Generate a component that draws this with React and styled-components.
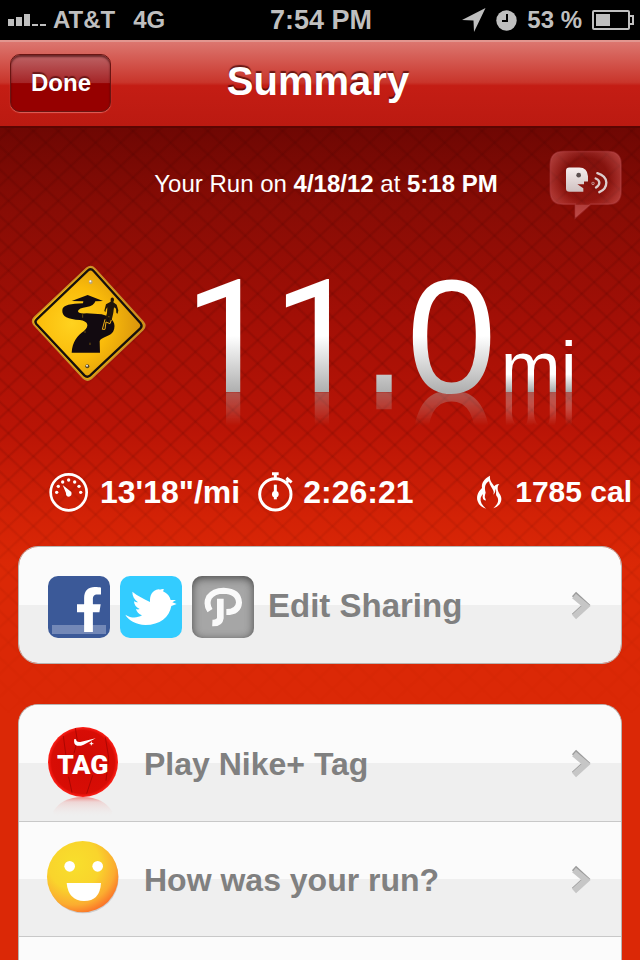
import React from 'react';
import styled, { createGlobalStyle } from 'styled-components';
import { FaFacebookF } from 'react-icons/fa';

const GlobalStyle = createGlobalStyle`
  * {
    box-sizing: border-box;
  }

  body {
    margin: 0;
    background: #db2806;
    font-family: "Liberation Sans", Arial, sans-serif;
  }

  button {
    font-family: inherit;
    border: 0;
    padding: 0;
    background: none;
    cursor: pointer;
  }
`;

const Screen = styled.div`
  display: flex;
  flex-direction: column;
  min-height: 100vh;
`;

const StatusBar = styled.div`
  display: grid;
  grid-template-columns: 1fr auto 1fr;
  align-items: center;
  height: 40px;
  padding: 0 6px 0 8px;
  background: #000;
  color: #bfbfbf;
  font-size: 27px;
  font-weight: bold;
  white-space: nowrap;
`;

const StatusGroup = styled.div`
  display: flex;
  align-items: center;
  justify-content: ${props => props.$end ? 'flex-end' : 'flex-start'};
  gap: ${props => props.$gap}px;
  font-size: 24px;
`;

const Carrier = styled.span`
  margin-right: 12px;
`;

const NavBar = styled.header`
  display: grid;
  grid-template-columns: 1fr auto 1fr;
  align-items: center;
  height: 88px;
  padding: 0 10px 2px;
  border-top: 2px solid #e2968f;
  border-bottom: 2px solid #5c0502;
  background: linear-gradient(#dc766f, #c9352b 48%, #c41d14 52%, #bb1a11);
`;

const DoneButton = styled.button`
  justify-self: start;
  height: 58px;
  padding: 0 19px 0 20px;
  border: 1px solid #6a1512;
  border-radius: 10px;
  background: linear-gradient(#bd6466, #a52426 50%, #960000 51%, #960000);
  box-shadow: inset 0 2px 2px rgba(50, 0, 0, 0.6), 0 1px 1px #e0625a;
  color: #fff;
  font-size: 24px;
  font-weight: bold;
  text-shadow: 0 -2px 1px rgba(60, 0, 0, 0.6);
`;

const Title = styled.h1`
  margin: 0 4px 4px 0;
  color: #fff;
  font-size: 40px;
  line-height: 48px;
  text-shadow: 0 -2px 1px rgba(60, 0, 0, 0.7);
`;

const Content = styled.main`
  position: relative;
  isolation: isolate;
  display: flex;
  flex-direction: column;
  flex: 1;
  padding-top: 21px;
  background: linear-gradient(#6f0703, #880c05 80px, #a20f06 190px, #b91406 300px, #d32206 390px, #db2806 440px);

  &::before {
    content: '';
    position: absolute;
    z-index: -1;
    inset: 0;
    background:
      repeating-linear-gradient(43deg, rgba(60, 0, 0, 0.14) 0, transparent 2px, transparent 15px, rgba(60, 0, 0, 0.14) 17px),
      repeating-linear-gradient(-43deg, rgba(60, 0, 0, 0.14) 0, transparent 2px, transparent 15px, rgba(60, 0, 0, 0.14) 17px);
    mask-image: linear-gradient(#000 300px, rgba(0, 0, 0, 0.5) 420px, transparent 590px);
  }
`;

const RunHeader = styled.div`
  display: grid;
  grid-template-columns: 1fr auto 1fr;
  align-items: center;
  padding: 0 16px 0 28px;
`;

const RunDate = styled.p`
  grid-column: 2;
  margin: 0 0 2px;
  color: #fff;
  font-size: 24px;
  white-space: nowrap;
`;

const VoiceButton = styled.button`
  justify-self: end;

  svg {
    display: block;
  }
`;

const Distance = styled.div`
  display: flex;
  align-items: center;
  margin-top: 35px;
  padding-left: 30px;

  > svg {
    flex: none;
    margin-bottom: 26px;
  }
`;

const Reading = styled.div`
  display: flex;
  align-items: baseline;
  gap: 4px;
  margin-left: 36px;
`;

const Amount = styled.span`
  height: 162px;
  font-size: 162px;
  line-height: 162px;
  color: transparent;
  background: linear-gradient(#fff 50%, #b0b0b0 84%);
  background-clip: text;
  -webkit-box-reflect: below -50px linear-gradient(transparent 64%, rgba(255, 255, 255, 0.4) 84%, transparent 85%);
`;

const Ones = styled.span`
  font-family: Roboto, "Liberation Sans", sans-serif;
  font-size: 158px;
`;

const Unit = styled.span`
  height: 72px;
  font-size: 72px;
  line-height: 72px;
  color: transparent;
  background: linear-gradient(#fff 60%, #aaa 84%);
  background-clip: text;
  -webkit-box-reflect: below -22px linear-gradient(transparent 38%, rgba(255, 255, 255, 0.45) 84%, transparent 85%);
`;

const Stats = styled.div`
  display: flex;
  align-items: center;
  gap: 18px;
  margin-top: 55px;
  padding: 0 8px 0 49px;
`;

const Stat = styled.div`
  display: flex;
  align-items: center;
  gap: ${props => props.$gap}px;
  height: 40px;
  margin-left: ${props => props.$last ? 'auto' : 0};
  color: #fff;
  font-size: ${props => props.$last ? 30 : 32}px;
  font-weight: bold;
  white-space: nowrap;
`;

const Card = styled.section`
  display: flex;
  flex-direction: column;
  flex: ${props => props.$open ? '1' : 'none'};
  margin: ${props => props.$open ? '40px' : '34px'} 18px 0;
  border: 1px solid #b9b4b2;
  border-bottom-width: ${props => props.$open ? 0 : 1}px;
  border-radius: ${props => props.$open ? '20px 20px 0 0' : '20px'};
  background: #fbfbfb;
  overflow: hidden;
`;

const Row = styled.button`
  display: flex;
  align-items: center;
  gap: ${props => props.$gap}px;
  min-height: 116px;
  padding: 0 30px 0 ${props => props.$inset || 29}px;
  background: linear-gradient(#fbfbfb 50%, #efefef 50%);
  color: #808080;
  font-size: ${props => props.$size || 32}px;
  font-weight: bold;
  text-align: left;

  & + & {
    border-top: 1px solid #c8c8c8;
  }

  &:last-child {
    border-bottom: ${props => props.$ruled ? '1px solid #c8c8c8' : 0};
  }

  > svg {
    flex: none;
  }
`;

const RowLabel = styled.span`
  flex: 1;
  padding-top: 2px;
`;

const Networks = styled.span`
  display: flex;
  gap: 10px;
  padding-top: 4px;
`;

const Network = styled.span`
  position: relative;
  display: flex;
  align-items: center;
  justify-content: center;
  width: 62px;
  height: 62px;
  border-radius: 10px;
  overflow: hidden;
  color: #fff;
  background: ${props => props.$color};
  box-shadow: ${props => props.$off ? 'inset 0 2px 8px rgba(40, 40, 40, 0.75)' : 'none'};
`;

const FacebookTile = styled(Network)`
  align-items: flex-end;
  justify-content: flex-end;
  padding: 0 7px 4px 0;

  &::before {
    content: '';
    position: absolute;
    left: 4px;
    right: 4px;
    bottom: 4px;
    height: 9px;
    background: #7388b7;
  }

  svg {
    position: relative;
    width: 28px;
  }
`;

const SignalIcon = () => (
  <svg width="39" height="14" viewBox="0 0 39 14" fill="#bfbfbf">
    <path d="M0 6h6v7H0zM8 4h6v9H8zM16 1h6v12h-6zM24 11h6v2h-6zM32 11h6v2h-6z" />
  </svg>
);

const LocationIcon = () => (
  <svg width="24" height="24" viewBox="0 0 24 24" fill="#bfbfbf">
    <path d="M23.500 0 12 24 11.500 12.500 0 12z" />
  </svg>
);

const ClockIcon = () => (
  <svg width="21" height="21" viewBox="0 0 21 21">
    <circle cx="10.500" cy="10.500" r="10.200" fill="#bfbfbf" />
    <path d="M11 4v7H6" fill="none" stroke="#000" strokeWidth="2" />
  </svg>
);

const BatteryIcon = () => (
  <svg width="42" height="20" viewBox="0 0 42 20" fill="none" stroke="#bfbfbf" strokeWidth="2">
    <rect x="1" y="1" width="36" height="18" rx="1" />
    <path d="M38 6h3v8h-3" />
    <rect x="4" y="4" width="14" height="12" fill="#bfbfbf" stroke="none" />
  </svg>
);

const VoiceIcon = () => (
  <svg width="76" height="71" viewBox="84 56 228 212">
    <defs>
      <radialGradient id="bubble" cx="50%" cy="42%" r="65%">
        <stop offset="0.500" stopColor="#ff8080" stopOpacity="0.080" />
        <stop offset="1" stopColor="#ff8a88" stopOpacity="0.500" />
      </radialGradient>
      <linearGradient id="face" x1="0" y1="0" x2="0" y2="1">
        <stop offset="0" stopColor="#f6eeee" />
        <stop offset="1" stopColor="#cfc0c0" />
      </linearGradient>
    </defs>
    <path
      d="M130 63h134q39 0 39 39v80q0 39-39 39h-52l-46 41v-41h-36q-39 0-39-39v-80q0-39 39-39z"
      fill="url(#bubble)"
      stroke="#b8474a"
      strokeOpacity="0.400"
      strokeWidth="5"
    />
    <path d="M166 223h44l-44 38z" fill="#c0504f" opacity="0.600" />
    <path
      d="M148 111h30q24 0 26 26v16h-12v8h-20l18 12v11h-42q-10 0-10-10v-53q0-10 10-10z"
      fill="url(#face)"
    />
    <circle cx="176" cy="134" r="7" fill="#5c5050" />
    <g fill="none" stroke="#ddcdcd" strokeWidth="7" strokeLinecap="round">
      <circle cx="219" cy="158" r="1" />
      <path d="M227 144q11 4 11 13 0 8-10 14" />
      <path d="M232 128q26 8 27 28 0 20-21 29" />
    </g>
  </svg>
);

const RoadSign = () => (
  <svg width="118" height="118" viewBox="90 72 354 354">
    <defs>
      <radialGradient id="sign" cx="35%" cy="50%" r="65%">
        <stop offset="0" stopColor="#ffd21f" />
        <stop offset="0.500" stopColor="#fabb0a" />
        <stop offset="1" stopColor="#d4900d" />
      </radialGradient>
    </defs>
    <path
      d="M260 84q13-10 25 2L430 246q10 12-1 23L274 416q-13 10-24-1L101 254q-8-12 2-22z"
      fill="url(#sign)"
      stroke="#c78c2c"
      strokeWidth="4"
    />
    <path
      d="M264 91q9-7 17 2L422 250q6 8-1 15L270 407q-9 7-17-1L109 252q-6-8 1-14z"
      fill="none"
      stroke="#17100d"
      strokeWidth="7"
    />
    <path
      d="M215 183 263 165 309 183 286 184Q282 198 260 201 236 204 234 213 233 222 260 220L305 223C340 232 350 253 340 274 332 290 304 291 299 303L300 338H215C217 305 232 287 252 273 270 257 263 243 240 240 204 238 185 230 187 210 188 194 214 192 249 190L250 184z"
      fill="#120a10"
    />
    <path
      d="M332 176q5-6 9-1 3 5-1 12l10 7 5 17-2 10-4-2-1-13-6-4-2 16-3 14-6 22-8-1 5-24-4 2-4 19-4 12-6-2 4-17 7-24 1-17-4 6-2 9-3-5 5-19 14-8z"
      fill="#20150a"
    />
    <path d="M315 238 307 268h8l3-22 12 5 4-11" fill="none" stroke="#e9aa18" strokeWidth="3" />
    <circle cx="272" cy="126" r="6" fill="#b8a67c" />
    <circle cx="271" cy="124" r="3" fill="#fff" />
    <circle cx="262" cy="379" r="6" fill="#53451f" />
    <circle cx="261" cy="377" r="3" fill="#eee" />
    <path d="M248 223v10M255 272v7M270 308v7" stroke="#6c5011" strokeWidth="3" />
  </svg>
);

const PaceIcon = () => (
  <svg width="39" height="39" viewBox="57 35 117 117">
    <circle cx="116" cy="93" r="54" fill="none" stroke="#fff" strokeWidth="8" />
    <g fill="#fff">
      <circle cx="80" cy="93" r="5" />
      <circle cx="85" cy="75" r="5" />
      <circle cx="98" cy="62" r="5" />
      <circle cx="116" cy="56" r="5" />
      <circle cx="134" cy="62" r="5" />
      <circle cx="147" cy="75" r="5" />
      <circle cx="152" cy="93" r="5" />
      <path d="M98 71 124 92q3 12-7 14-10 0-9-11z" />
    </g>
  </svg>
);

const StopwatchIcon = () => (
  <svg width="35" height="41" viewBox="686 28 105 123">
    <g fill="none" stroke="#fff">
      <circle cx="738" cy="95" r="47" strokeWidth="9" />
      <path d="M728 33h20M738 31v15" strokeWidth="9" />
      <path d="M768 62 778 53M771 46 787 59" strokeWidth="9" />
      <path d="M738 66v44" strokeWidth="9" />
    </g>
    <circle cx="738" cy="95" r="10" fill="#fff" />
  </svg>
);

const FlameIcon = () => (
  <svg width="27" height="34" viewBox="440 42 81 102" fill="#fff">
    <path d="M482 44C464 53 456 66 458 81 444 94 441 108 445 121 449 133 458 139 470 143 458 133 452 122 454 111 456 106 458 102 461 100 458 111 462 118 469 119L469 114C465 110 466 103 469 95 464 78 468 67 479 61 481 74 488 80 491 87 494 92 493 97 492 101 498 96 499 88 498 83 504 93 496 99 504 108 511 122 502 132 492 142 508 137 517 126 516 112 516 101 504 94 505 81 505 76 507 72 510 69 501 69 497 72 495 76 489 66 480 60 482 44z" />
  </svg>
);

const BirdLogo = () => (
  <svg width="52" height="36" viewBox="345 147 156 108" fill="#fff">
    <path d="M346 224C365 236 382 234 396 226 386 222 380 216 378 207 382 209 386 209 389 207 378 202 372 194 372 183 376 186 380 187 384 187 372 178 367 168 367 155 382 168 402 176 420 186 419 166 426 151 446 148Q451 150 456 147L462 148 459 154C472 160 480 170 482 180L498 180 487 187 500 192 484 198C478 232 450 255 406 255 378 254 354 240 346 224z" />
  </svg>
);

const PathLogo = () => (
  <svg width="40" height="42" viewBox="580 136 120 126" fill="none" stroke="#fafafa">
    <path d="M601 210Q588 190 598 170 612 150 642 150 687 152 688 186 686 214 650 214" strokeWidth="18" />
    <path d="M632 174v58q-2 16-24 15" strokeWidth="20" />
  </svg>
);

const TagIcon = () => (
  <svg width="70" height="112" viewBox="114 21 210 336">
    <defs>
      <radialGradient id="tag" cx="50%" cy="50%" r="50%">
        <stop offset="0" stopColor="#cf0a04" />
        <stop offset="0.900" stopColor="#d80d05" />
        <stop offset="1" stopColor="#ff2018" />
      </radialGradient>
      <linearGradient id="tagGlow" x1="0" y1="0" x2="0" y2="1">
        <stop offset="0" stopColor="#ee5550" stopOpacity="0.700" />
        <stop offset="0.250" stopColor="#eeb0ae" stopOpacity="0.400" />
        <stop offset="1" stopColor="#efefef" stopOpacity="0" />
      </linearGradient>
    </defs>
    <path d="M130 334Q155 292 218 291 281 292 306 334L306 352H130z" fill="url(#tagGlow)" />
    <circle cx="219" cy="186" r="105" fill="url(#tag)" />
    <path d="M196 84 202 122 192 160M160 108l8 60M286 112l10 60-8 70M248 226l-18 55M176 230l10 48" fill="none" stroke="#8e0300" strokeWidth="3" opacity="0.600" />
    <path d="M193 117q-4 16 8 20 8 2 20-3L257 115 211 126q-12 2-13-8z" fill="#fff" />
    <path d="M244 125v11M239 131h11" stroke="#fff" strokeWidth="3" />
    <text x="218" y="221" textAnchor="middle" fill="#fff" fontFamily="Roboto, sans-serif" fontWeight="900" fontSize="80">TAG</text>
  </svg>
);

const SmileyIcon = () => (
  <svg width="74" height="78" viewBox="109 423 222 234">
    <defs>
      <radialGradient id="smile" cx="38%" cy="32%" r="72%">
        <stop offset="0" stopColor="#f8df2c" />
        <stop offset="0.500" stopColor="#f9d42c" />
        <stop offset="0.800" stopColor="#fbac30" />
        <stop offset="1" stopColor="#fb7028" />
      </radialGradient>
    </defs>
    <circle cx="221" cy="537" r="106" fill="#000" opacity="0.140" />
    <circle cx="219" cy="533" r="107" fill="url(#smile)" />
    <circle cx="180" cy="502" r="16" fill="#fff" />
    <circle cx="264" cy="502" r="16" fill="#fff" />
    <path d="M171 552h103q-3 54-51 54-47-1-52-54z" fill="#fff" />
  </svg>
);

const Chevron = () => (
  <svg width="20" height="30" viewBox="0 0 20 30" fill="none" strokeWidth="6">
    <path d="M3 4 15 15 3 26" stroke="#9c9c9c" />
    <path d="M3 6 15 16 3 27" stroke="#c6c6c6" />
  </svg>
);

function App() {
  return (
    <Screen>
      <GlobalStyle />
      <StatusBar>
        <StatusGroup $gap={6}>
          <SignalIcon />
          <Carrier>AT&amp;T</Carrier>
          <span>4G</span>
        </StatusGroup>
        <span>7:54 PM</span>
        <StatusGroup $end $gap={10}>
          <LocationIcon />
          <ClockIcon />
          <span>53 %</span>
          <BatteryIcon />
        </StatusGroup>
      </StatusBar>
      <NavBar>
        <DoneButton type="button">Done</DoneButton>
        <Title>Summary</Title>
      </NavBar>
      <Content>
        <RunHeader>
          <RunDate>
            Your Run on <b>4/18/12</b> at <b>5:18 PM</b>
          </RunDate>
          <VoiceButton type="button" aria-label="Voice feedback">
            <VoiceIcon />
          </VoiceButton>
        </RunHeader>
        <Distance>
          <RoadSign />
          <Reading>
            <Amount><Ones>11</Ones>.0</Amount>
            <Unit>mi</Unit>
          </Reading>
        </Distance>
        <Stats>
          <Stat $gap={12}>
            <PaceIcon />
            13'18"/mi
          </Stat>
          <Stat $gap={10}>
            <StopwatchIcon />
            2:26:21
          </Stat>
          <Stat $gap={12} $last>
            <FlameIcon />
            1785 cal
          </Stat>
        </Stats>
        <Card>
          <Row type="button" $gap={14} $size={33}>
            <Networks>
              <FacebookTile $color="#3b5998">
                <FaFacebookF size={49} />
              </FacebookTile>
              <Network $color="#33ccff">
                <BirdLogo />
              </Network>
              <Network $color="#a6a6a6" $off>
                <PathLogo />
              </Network>
            </Networks>
            <RowLabel>Edit Sharing</RowLabel>
            <Chevron />
          </Row>
        </Card>
        <Card $open>
          <Row type="button" $gap={26}>
            <TagIcon />
            <RowLabel>Play Nike+ Tag</RowLabel>
            <Chevron />
          </Row>
          <Row type="button" $gap={24} $inset={27} $ruled>
            <SmileyIcon />
            <RowLabel>How was your run?</RowLabel>
            <Chevron />
          </Row>
        </Card>
      </Content>
    </Screen>
  );
}

export default App;
